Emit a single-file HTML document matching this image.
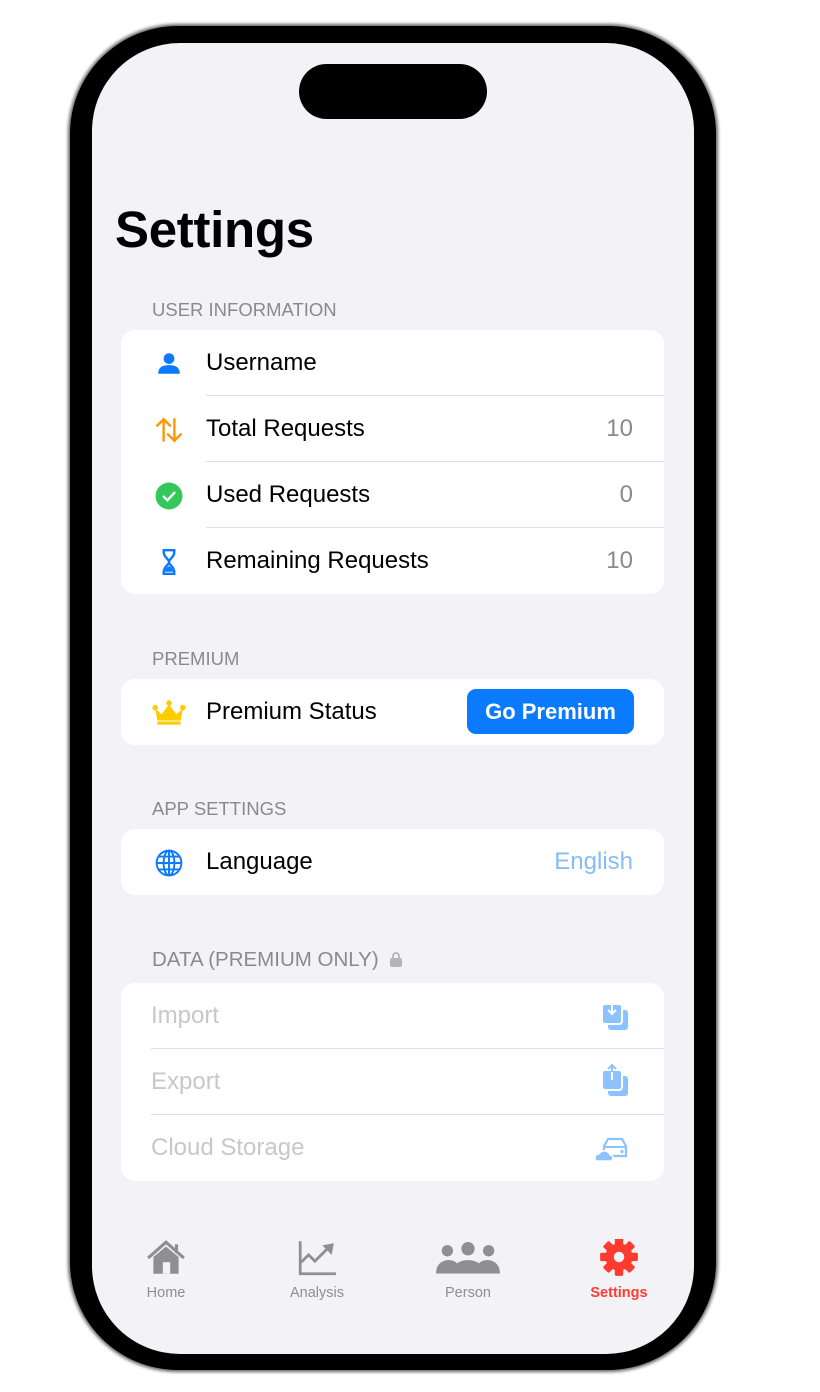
<!DOCTYPE html>
<html><head><meta charset="utf-8"><style>
*{margin:0;padding:0;box-sizing:border-box}
body{width:820px;height:1392px;background:#fff;position:relative;overflow:hidden;font-family:"Liberation Sans",Arial,sans-serif}
.frame{position:absolute;left:70px;top:26px;width:646px;height:1344px;background:#000;border-radius:108px;box-shadow:0 0 3px 2px rgba(0,0,0,.6)}
.screen{position:absolute;left:92px;top:43px;width:602px;height:1311px;background:#f2f2f7;border-radius:88px;overflow:hidden}
.island{position:absolute;left:207px;top:21px;width:188px;height:55px;background:#000;border-radius:28px}
.title{position:absolute;left:23px;top:157px;font-size:51px;font-weight:bold;color:#000;letter-spacing:-0.3px}
.hdr{position:absolute;left:60px;font-size:18.5px;color:#8a8a8e}
.card{position:absolute;left:29px;width:543px;background:#fff;border-radius:14px}
.row{position:relative;height:66px;display:flex;align-items:center;font-size:24px;color:#000}
.row .lbl{position:absolute;left:85px}
.row .val{position:absolute right:31px;color:#8a8a8e}
.row .val{position:absolute;right:31px;color:#8a8a8e}
.sep{position:absolute;left:85px;right:0;bottom:0;height:1px;background:#e0e0e3}
.ic{position:absolute;left:34px;top:20px;width:28px;height:28px}
.dis{color:#c7c7cc}
.tab{position:absolute;top:1196px;width:120px;text-align:center;font-size:14.5px;color:#8e8e93}
.tab svg{display:block;margin:0 auto 8px}
</style></head><body>
<div class="frame"></div>
<div class="screen">
<div class="island"></div>
<div class="title">Settings</div>
<div class="hdr" style="top:256px">USER INFORMATION</div>
<div class="card" style="top:287px">
 <div class="row"><svg class="ic" viewBox="0 0 26 26"><circle cx="13" cy="8" r="5" fill="#0a7aff"/><path d="M3 22c0-6 4-8 10-8s10 2 10 8z" fill="#0a7aff"/></svg><span class="lbl">Username</span><div class="sep"></div></div>
 <div class="row"><svg class="ic" viewBox="0 0 26 26" fill="none" stroke="#ff9500" stroke-width="2.2" stroke-linecap="round"><path d="M8 23V3M2 9l6-6 6 6M18 3v20M12 17l6 6 6-6"/></svg><span class="lbl">Total Requests</span><span class="val">10</span><div class="sep"></div></div>
 <div class="row"><svg class="ic" viewBox="0 0 26 26"><circle cx="13" cy="13" r="12.5" fill="#34c759"/><path d="M8 13.5l3.5 3.5 6.5-7" stroke="#fff" stroke-width="2.2" fill="none" stroke-linecap="round"/></svg><span class="lbl">Used Requests</span><span class="val">0</span><div class="sep"></div></div>
 <div class="row"><svg class="ic" viewBox="0 0 26 26"><path d="M7 2h12M7 24h12M8 3c0 6 5 7 5 10s-5 4-5 10M18 3c0 6-5 7-5 10s5 4 5 10" stroke="#0a7aff" stroke-width="2.2" fill="none"/><path d="M9 22c1-3 3-5 4-5s3 2 4 5z" fill="#0a7aff"/></svg><span class="lbl">Remaining Requests</span><span class="val">10</span></div>
</div>
<div class="hdr" style="top:605px">PREMIUM</div>
<div class="card" style="top:636px">
 <div class="row"><svg class="ic" viewBox="0 0 32 26" style="width:34px;left:31px"><path d="M3 9l6 5 7-9 7 9 6-5-2 11H5z" fill="#ffcc00"/><circle cx="3" cy="8" r="2.6" fill="#ffcc00"/><circle cx="29" cy="8" r="2.6" fill="#ffcc00"/><circle cx="16" cy="3.5" r="2.6" fill="#ffcc00"/><rect x="5" y="21" width="22" height="3" fill="#ffcc00"/></svg><span class="lbl">Premium Status</span>
 <div style="position:absolute;right:30px;top:10px;width:167px;height:45px;background:#0a7aff;border-radius:9px;color:#fff;font-size:22px;font-weight:bold;text-align:center;line-height:45px">Go Premium</div></div>
</div>
<div class="hdr" style="top:755px">APP SETTINGS</div>
<div class="card" style="top:786px">
 <div class="row"><svg class="ic" viewBox="0 0 26 26" fill="none" stroke="#0a7aff" stroke-width="1.8"><circle cx="13" cy="13" r="11.5"/><ellipse cx="13" cy="13" rx="5" ry="11.5"/><path d="M1.5 13h23M13 1.5v23M3.5 7h19M3.5 19h19"/></svg><span class="lbl">Language</span><span class="val" style="color:#86bdf8">English</span></div>
</div>
<div class="hdr" style="top:905px;font-size:20.5px">DATA (PREMIUM ONLY) <svg width="12" height="15" viewBox="0 0 12 15" style="vertical-align:-1px;margin-left:6px"><rect x="0" y="6" width="12" height="9" rx="2" fill="#b5b5b9"/><path d="M3 7V4a3 3 0 0 1 6 0v3" stroke="#b5b5b9" stroke-width="1.8" fill="none"/></svg></div>
<div class="card" style="top:940px">
 <div class="row"><span class="lbl dis" style="left:30px">Import</span><svg style="position:absolute;right:32px;top:16px" width="32" height="36" viewBox="0 0 32 34"><rect x="8" y="10" width="20" height="20" rx="3" fill="#8cc3ff"/><rect x="2" y="4" width="20" height="20" rx="3" fill="#8cc3ff" stroke="#fff" stroke-width="2"/><path d="M12 1v13M8 10l4 4 4-4" stroke="#fff" stroke-width="2" fill="none"/></svg><div class="sep" style="left:30px"></div></div>
 <div class="row"><span class="lbl dis" style="left:30px">Export</span><svg style="position:absolute;right:32px;top:14px" width="32" height="38" viewBox="0 0 32 36"><rect x="8" y="12" width="20" height="20" rx="3" fill="#8cc3ff"/><rect x="2" y="6" width="20" height="20" rx="3" fill="#8cc3ff" stroke="#fff" stroke-width="2"/><path d="M12 1v14M8 5l4-4 4 4" stroke="#8cc3ff" stroke-width="2" fill="none"/><path d="M12 8v8" stroke="#fff" stroke-width="2"/></svg><div class="sep" style="left:30px"></div></div>
 <div class="row"><span class="lbl dis" style="left:30px">Cloud Storage</span><svg style="position:absolute;right:32px;top:20px" width="38" height="28" viewBox="0 0 38 26"><path d="M10 10l4-7h14l4 7v10H10z" fill="none" stroke="#8cc3ff" stroke-width="2.2"/><path d="M10 11h22" stroke="#8cc3ff" stroke-width="2"/><circle cx="28" cy="15.5" r="1.6" fill="#8cc3ff"/><path d="M1 23a4 4 0 0 1 4-5 6 6 0 0 1 11 1 3 3 0 0 1 0 6H3a2 2 0 0 1-2-2z" fill="#8cc3ff" stroke="#fff" stroke-width="1.5"/></svg></div>
</div>
<div class="tab" style="left:14px"><svg width="42" height="38" viewBox="0 0 40 36"><path d="M3 18L20 3l17 15" stroke="#8e8e93" stroke-width="3" fill="none"/><path d="M30 5v8" stroke="#8e8e93" stroke-width="3"/><path d="M8 17L20 7l12 10v16H8z" fill="#8e8e93"/><rect x="17" y="22" width="7" height="11" fill="#f2f2f7"/></svg>Home</div>
<div class="tab" style="left:165px"><svg width="42" height="38" viewBox="0 0 40 36"><path d="M4 2v31h34" stroke="#8e8e93" stroke-width="2.6" fill="none"/><path d="M5 22l7-7 6 6 11-11" stroke="#8e8e93" stroke-width="2.6" fill="none"/><path d="M25 6l11-2-2 11z" fill="#8e8e93"/></svg>Analysis</div>
<div class="tab" style="left:316px"><svg width="66" height="38" viewBox="0 0 64 36"><circle cx="12" cy="11" r="5.5" fill="#8e8e93"/><circle cx="32" cy="9" r="6.5" fill="#8e8e93"/><circle cx="52" cy="11" r="5.5" fill="#8e8e93"/><path d="M1 33c0-9 6-13 12-13s10 3 10 7v6zM41 27c0-4 4-7 10-7s12 4 12 13H41z" fill="#8e8e93"/><path d="M17 33c0-9 7-13 15-13s15 4 15 13z" fill="#8e8e93"/></svg>Person</div>
<div class="tab" style="left:467px;color:#ff3b30;font-weight:bold"><svg width="42" height="38" viewBox="0 0 40 36"><g transform="translate(20 17)" fill="#ff3b30"><circle r="13"/><g><rect x="-4" y="-18" width="8" height="8" rx="1.5"/><rect x="-4" y="10" width="8" height="8" rx="1.5"/><rect x="-18" y="-4" width="8" height="8" rx="1.5"/><rect x="10" y="-4" width="8" height="8" rx="1.5"/></g><g transform="rotate(45)"><rect x="-4" y="-18" width="8" height="8" rx="1.5"/><rect x="-4" y="10" width="8" height="8" rx="1.5"/><rect x="-18" y="-4" width="8" height="8" rx="1.5"/><rect x="10" y="-4" width="8" height="8" rx="1.5"/></g><circle r="5" fill="#f2f2f7"/></g></svg>Settings</div>
</div>
</body></html>
